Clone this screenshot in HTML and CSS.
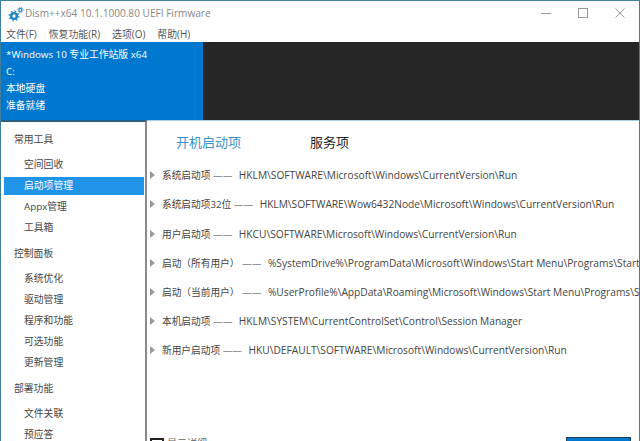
FILE: index.html
```html
<!DOCTYPE html>
<html lang="zh-CN">
<head>
    <meta charset="UTF-8">
    <title>Dism++x64</title>
    <link rel="stylesheet" href="styles.css">
</head>
<body>
    <div class="window">
        <!-- Title bar -->
        <div class="titlebar">
            <svg class="app-icon" width="16" height="16" viewBox="0 0 20 20">
                <circle cx="7.5" cy="12.5" r="3.6" fill="none" stroke="#1f86c9" stroke-width="3"/>
                <circle cx="7.5" cy="12.5" r="6" fill="none" stroke="#1f86c9" stroke-width="1.6" stroke-dasharray="2 2.7"/>
                <circle cx="15.5" cy="5" r="1.9" fill="none" stroke="#1f86c9" stroke-width="1.6"/>
                <circle cx="15.5" cy="5" r="3.4" fill="none" stroke="#1f86c9" stroke-width="1" stroke-dasharray="1.3 1.4"/>
            </svg>
            <span class="title-text">Dism++x64 10.1.1000.80 UEFI Firmware</span>
            <div class="win-buttons">
                <svg width="10" height="10" viewBox="0 0 10 10"><path d="M0 5.5H10" stroke="#999" fill="none"/></svg>
                <svg width="10" height="10" viewBox="0 0 10 10"><rect x="0.5" y="0.5" width="9" height="9" stroke="#999" fill="none"/></svg>
                <svg width="10" height="10" viewBox="0 0 10 10"><path d="M0.5 0.5L9.5 9.5M9.5 0.5L0.5 9.5" stroke="#999" fill="none"/></svg>
            </div>
        </div>

        <!-- Menu -->
        <div class="menubar">
            <span>文件(F)</span>
            <span>恢复功能(R)</span>
            <span>选项(O)</span>
            <span>帮助(H)</span>
        </div>

        <!-- Image info -->
        <div class="header">
            <div class="session">
                <div>*Windows 10 专业工作站版 x64</div>
                <div>C:</div>
                <div>本地硬盘</div>
                <div>准备就绪</div>
            </div>
            <div class="session-empty"></div>
        </div>

        <div class="main">
            <div class="sidebar">
                <div class="group">常用工具</div>
                <div class="item">空间回收</div>
                <div class="item active">启动项管理</div>
                <div class="item">Appx管理</div>
                <div class="item">工具箱</div>
                <div class="group">控制面板</div>
                <div class="item">系统优化</div>
                <div class="item">驱动管理</div>
                <div class="item">程序和功能</div>
                <div class="item">可选功能</div>
                <div class="item">更新管理</div>
                <div class="group">部署功能</div>
                <div class="item">文件关联</div>
                <div class="item">预应答</div>
            </div>

            <div class="content">
                <div class="tabs">
                    <span class="tab tab-active">开机启动项</span>
                    <span class="tab">服务项</span>
                </div>
                <div class="rows">
                    <div class="row"><i class="arrow"></i><span class="zh">系统启动项 —— </span><span>HKLM\SOFTWARE\Microsoft\Windows\CurrentVersion\Run</span></div>
                    <div class="row"><i class="arrow"></i><span class="zh">系统启动项32位 —— </span><span>HKLM\SOFTWARE\Wow6432Node\Microsoft\Windows\CurrentVersion\Run</span></div>
                    <div class="row"><i class="arrow"></i><span class="zh">用户启动项 —— </span><span>HKCU\SOFTWARE\Microsoft\Windows\CurrentVersion\Run</span></div>
                    <div class="row"><i class="arrow"></i><span class="zh">启动（所有用户） —— </span><span>%SystemDrive%\ProgramData\Microsoft\Windows\Start Menu\Programs\Startup</span></div>
                    <div class="row"><i class="arrow"></i><span class="zh">启动（当前用户） —— </span><span>%UserProfile%\AppData\Roaming\Microsoft\Windows\Start Menu\Programs\Startup</span></div>
                    <div class="row"><i class="arrow"></i><span class="zh">本机启动项 —— </span><span>HKLM\SYSTEM\CurrentControlSet\Control\Session Manager</span></div>
                    <div class="row"><i class="arrow"></i><span class="zh">新用户启动项 —— </span><span>HKU\DEFAULT\SOFTWARE\Microsoft\Windows\CurrentVersion\Run</span></div>
                </div>
                <div class="footer">
                    <label class="check"><i class="box"></i>显示详细</label>
                    <div class="action"></div>
                </div>
            </div>
        </div>
    </div>
</body>
</html>
```

FILE: styles.css
```css
html, body {
    margin: 0;
    padding: 0;
    height: 100%;
    overflow: hidden;
    background: #fff;
    font-family: "Open Sans", "Noto Sans CJK SC", sans-serif;
    font-size: 10px;
    color: #333;
}

.window {
    width: 640px;
    height: 441px;
    box-sizing: border-box;
    display: flex;
    flex-direction: column;
    border: 1px solid #3f7f9f;
    border-bottom: none;
    overflow: hidden;
}

.titlebar {
    height: 25px;
    flex: none;
    display: flex;
    align-items: center;
    padding-left: 7px;
}

.app-icon {
    margin-right: 1px;
}

.title-text {
    color: #888;
    font-size: 10.1px;
    margin-top: -2px;
}

.win-buttons {
    margin-left: auto;
    display: flex;
    gap: 27px;
    padding-right: 14px;
    margin-top: -2px;
}

.menubar {
    height: 16px;
    flex: none;
    display: flex;
    gap: 12px;
    padding-left: 5px;
    align-items: center;
    font-size: 9.9px;
    color: #555;
}

.header {
    height: 78px;
    flex: none;
    display: flex;
    margin-right: -1px;
}

.session {
    width: 202px;
    background: #0078d0;
    color: #fff;
    padding: 4px 0 0 5px;
    box-sizing: border-box;
    font-size: 9.8px;
}

.session div {
    height: 17px;
    line-height: 17px;
}

.session-empty {
    flex: 1;
    background: #262626;
}

.main {
    flex: 1;
    display: flex;
    min-height: 0;
}

.sidebar {
    width: 140px;
    flex: none;
    border-top: 2px solid #2a5f7f;
    border-right: 2px solid #8a8a8a;
    padding: 2px 1px 0 3px;
}

.group {
    height: 21px;
    line-height: 21px;
    padding-left: 10px;
    margin: 4.6px 0 4.5px;
    font-size: 9.8px;
    color: #444;
}

.item {
    height: 21px;
    line-height: 21px;
    padding-left: 20px;
    font-size: 9.8px;
    color: #444;
}

.item.active {
    height: 18px;
    line-height: 18px;
    margin: 1.5px 0;
    background: #1f94e8;
    color: #fff;
}

.content {
    flex: 1;
    display: flex;
    flex-direction: column;
    min-width: 0;
    border-top: 1px solid #a8cfe6;
}

.tabs {
    height: 39.7px;
    flex: none;
    box-sizing: border-box;
    padding: 2px 0 0 29px;
    display: flex;
    align-items: center;
    gap: 69px;
    font-size: 13px;
    color: #222;
}

.tab-active {
    color: #3a8fc8;
}

.rows {
    flex: 1;
}

.row {
    height: 29.2px;
    display: flex;
    align-items: center;
    white-space: pre;
    font-size: 10.2px;
    color: #444;
    padding-left: 3px;
}

.zh {
    font-size: 9.7px;
    margin-right: 4px;
}

.arrow {
    width: 0;
    height: 0;
    border-left: 5px solid #9a9a9a;
    border-top: 4px solid transparent;
    border-bottom: 4px solid transparent;
    margin-right: 7px;
    flex: none;
}

.footer {
    height: 4px;
    flex: none;
    display: flex;
    justify-content: space-between;
    padding-left: 3px;
    padding-right: 8px;
}

.check {
    display: flex;
    color: #666;
    margin-top: 1px;
    line-height: 10px;
}

.box {
    width: 10px;
    height: 10px;
    border: 2px solid #222;
    margin-right: 3px;
}

.action {
    width: 65px;
    height: 4px;
    box-sizing: border-box;
    background: #0078d0;
    border: 1px solid #1c3f5c;
    border-bottom: none;
}
```
